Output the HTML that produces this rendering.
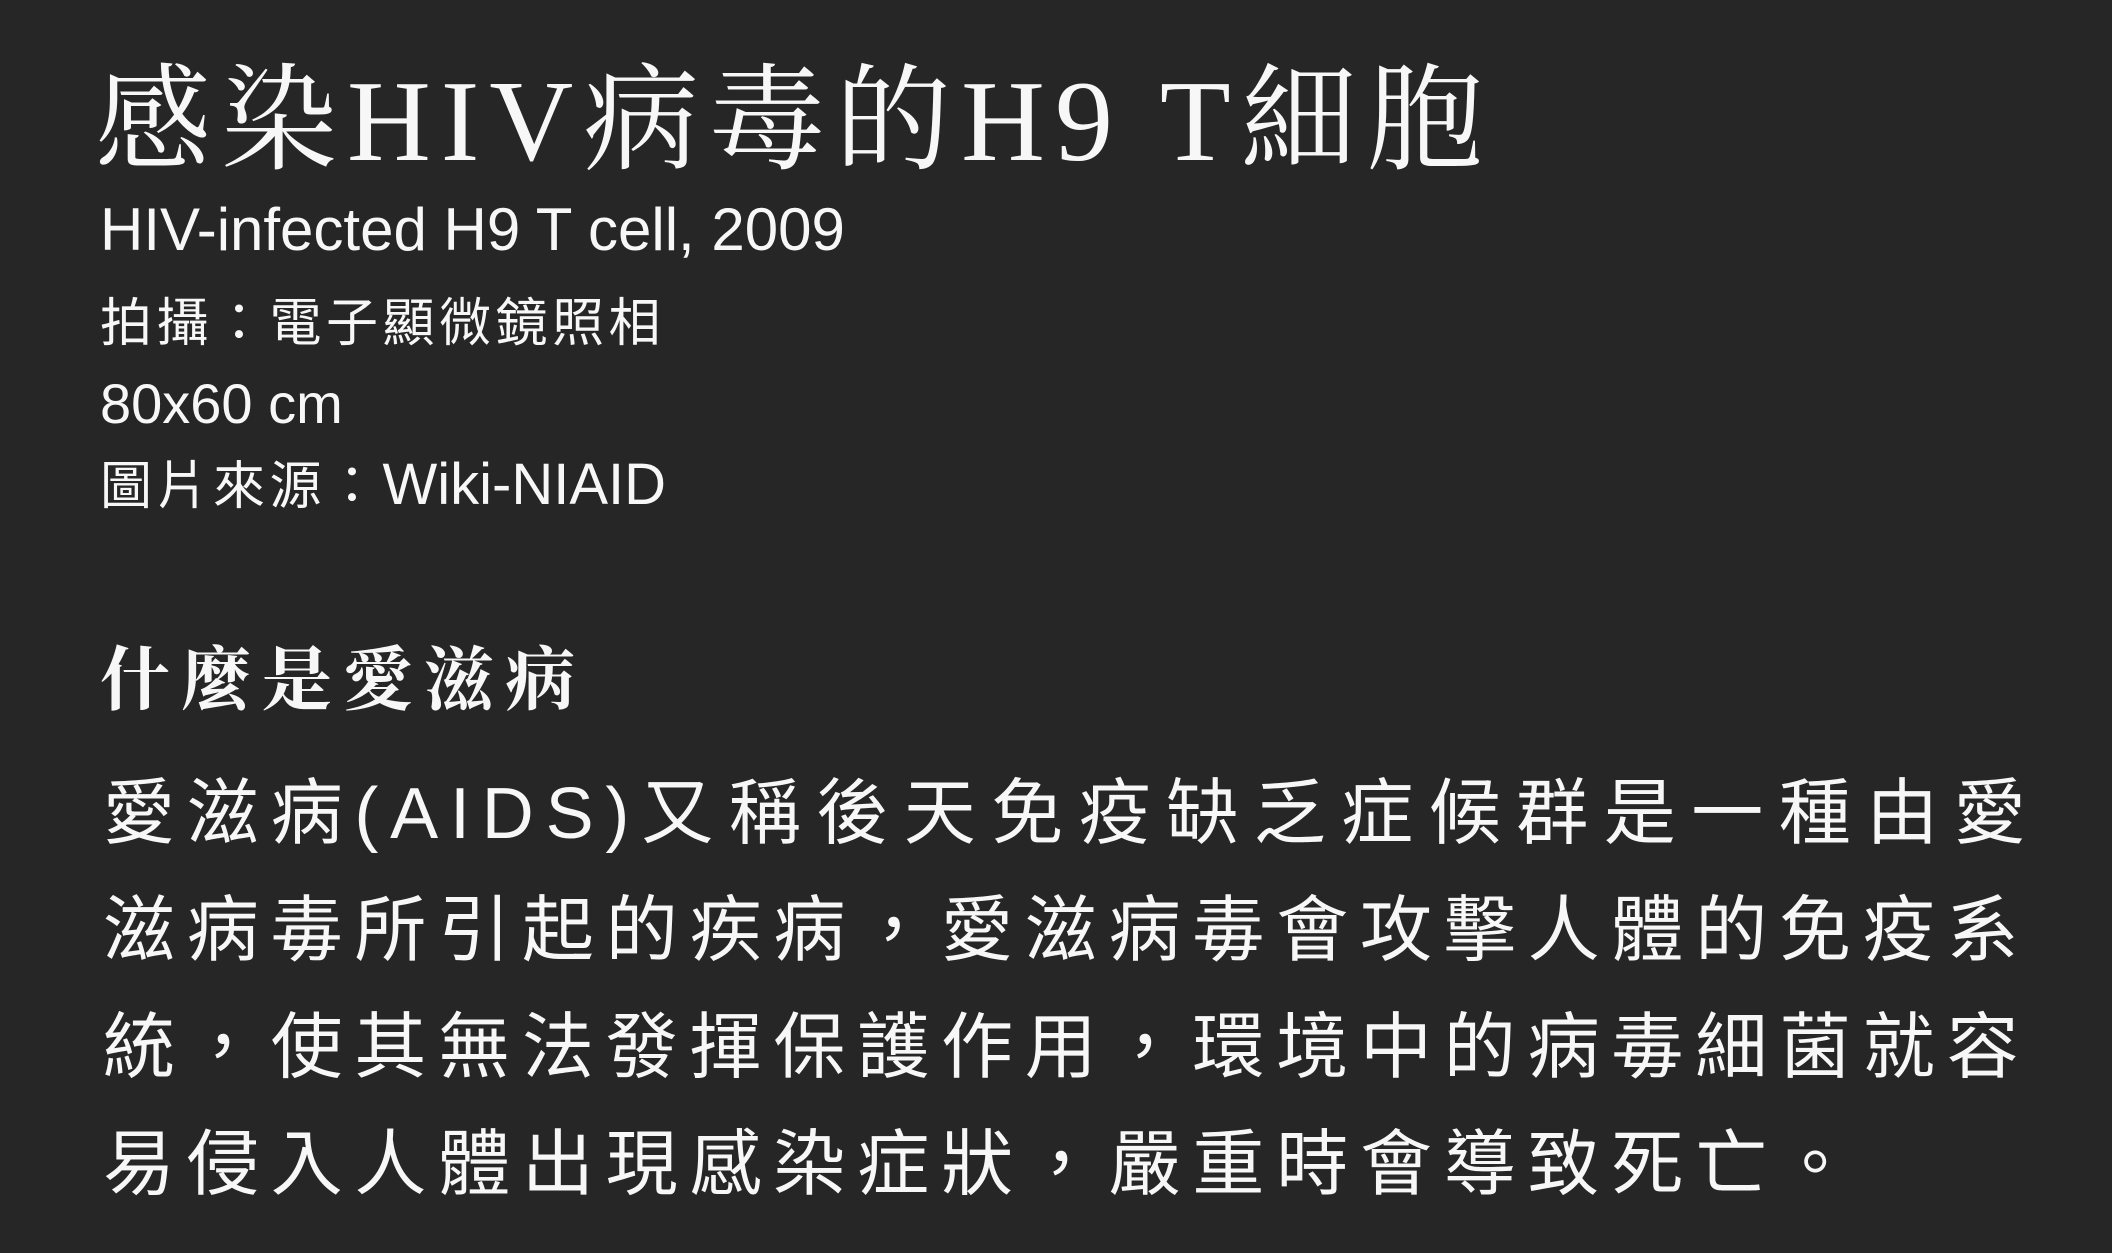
<!DOCTYPE html>
<html><head><meta charset="utf-8"><style>
html,body{margin:0;padding:0;background:#262626;width:2112px;height:1253px;overflow:hidden;color:#f7f7f7}
div{position:absolute;white-space:nowrap}
.t{left:95px;top:64px;font:normal 116px/1 "Liberation Serif","Noto Serif CJK SC",serif;letter-spacing:10px}
.s{left:100px;top:200px;font:60px/1 "Liberation Sans","Noto Sans CJK TC",sans-serif}
.m{left:100px;font:52px/1 "Liberation Sans","Noto Sans CJK TC",sans-serif;letter-spacing:4.5px}
.h{left:100px;top:640px;font:bold 70px/1 "Noto Serif CJK SC",serif;letter-spacing:11px}
.b{left:103px;top:756px;font:72px/117px "Liberation Sans","Noto Sans CJK TC",sans-serif;letter-spacing:11.8px}
</style></head><body>
<div class="t">感染HIV病毒的H9 T細胞</div>
<div class="s">HIV-infected H9 T cell, 2009</div>
<div class="m" style="top:298px">拍攝：電子顯微鏡照相</div>
<div class="m" style="top:376px;font-size:56px;letter-spacing:0">80x60 cm</div>
<div class="m" style="top:456px">圖片來源：<span style="font-size:58px;letter-spacing:0">Wiki-NIAID</span></div>
<div class="h">什麼是愛滋病</div>
<div class="b">愛滋病(AIDS)<span style="letter-spacing:15.5px">又稱後天免疫缺乏症候群是一種由愛</span><br>滋病毒所引起的疾病，愛滋病毒會攻擊人體的免疫系<br>統，使其無法發揮保護作用，環境中的病毒細菌就容<br>易侵入人體出現感染症狀，嚴重時會導致死亡。</div>
</body></html>
